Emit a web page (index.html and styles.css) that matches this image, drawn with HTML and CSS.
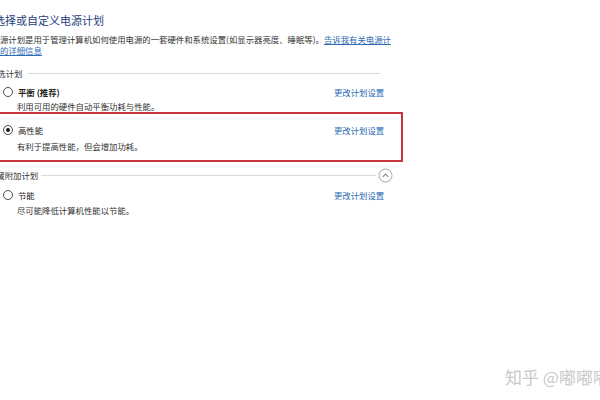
FILE: index.html
```html
<!DOCTYPE html>
<html lang="zh">
<head>
<meta charset="utf-8">
<link rel="stylesheet" href="styles.css">
</head>
<body>
<div class="page">
  <h1 class="title">选择或自定义电源计划</h1>
  <p class="desc"><span class="nowrap">源计划是用于管理计算机如何使用电源的一套硬件和系统设置(如显示器亮度、睡眠等)。<a class="link">告诉我有关电源计</a></span><br><a class="link">的详细信息</a></p>

  <div class="group-head">
    <span class="group-title cut1">首选计划</span>
    <span class="rule"></span>
  </div>

  <div class="plan plan-first">
    <div class="plan-row">
      <span class="radio"></span>
      <span class="plan-name bold">平衡 (推荐)</span>
      <a class="plan-link">更改计划设置</a>
    </div>
    <div class="plan-desc">利用可用的硬件自动平衡功耗与性能。</div>
  </div>

  <div class="plan plan-selected">
    <div class="plan-row">
      <span class="radio checked"></span>
      <span class="plan-name">高性能</span>
      <a class="plan-link">更改计划设置</a>
    </div>
    <div class="plan-desc">有利于提高性能，但会增加功耗。</div>
  </div>

  <div class="group-head group-two">
    <span class="group-title cut2">隐藏附加计划</span>
    <span class="rule short"></span>
    <svg class="toggle" width="15" height="15" viewBox="0 0 15 15"><circle cx="7.5" cy="7.5" r="6.5" fill="#fff" stroke="#a8a8a8" stroke-width="1"/><path d="M4.8 8.8 L7.5 6 L10.2 8.8" fill="none" stroke="#888" stroke-width="1.1"/></svg>
  </div>

  <div class="plan plan-last">
    <div class="plan-row">
      <span class="radio"></span>
      <span class="plan-name">节能</span>
      <a class="plan-link">更改计划设置</a>
    </div>
    <div class="plan-desc">尽可能降低计算机性能以节能。</div>
  </div>
</div>
<div class="watermark">知乎 @嘟嘟嘟</div>
</body>
</html>
```

FILE: styles.css
```css
html, body {
  margin: 0;
  padding: 0;
  background: #fff;
  width: 600px;
  height: 400px;
  overflow: hidden;
  position: relative;
  font-family: "Noto Sans CJK SC", "Noto Sans", sans-serif;
  color: #2b2b2b;
}
.page {
  width: 402px;
  padding-top: 12px;
}
.title {
  margin: 0 0 0 -6px;
  font-size: 11px;
  line-height: 16px;
  font-weight: normal;
  color: #1f3d7a;
}
.desc {
  margin: 6px 0 0 0;
  font-size: 8.4px;
  line-height: 11px;
  color: #333;
}
.nowrap { white-space: nowrap; }
.link {
  color: #2d6bb5;
  text-decoration: underline;
}
.group-head {
  display: flex;
  align-items: center;
  margin-top: 10px;
  height: 14px;
}
.group-two { margin-top: 6px; }
.group-title {
  font-size: 8.4px;
  line-height: 12px;
  color: #333;
  white-space: nowrap;
}
.cut1 { margin-left: -11px; }
.cut2 { margin-left: -12px; }
.rule {
  height: 1px;
  background: #d9d9d9;
  flex: 0 0 352px;
  margin-left: 5px;
}
.rule.short {
  flex: 0 0 335px;
  margin-left: 3px;
}
.toggle {
  display: block;
  margin-left: 2px;
}
.plan-first { margin-top: 5px; padding-bottom: 0; }
.plan-selected {
  border: 2px solid #c8333d;
  border-left: none;
  padding: 9px 0 8px 0;
  margin-right: -1px;
}
.plan-last { margin-top: 6px; }
.plan-row {
  display: flex;
  align-items: center;
  height: 13px;
}
.radio {
  width: 8px;
  height: 8px;
  border: 1px solid #4a4a4a;
  border-radius: 50%;
  background: #fff;
  margin-left: 3px;
  margin-right: 5px;
  position: relative;
  flex: none;
}
.radio.checked::after {
  content: "";
  position: absolute;
  left: 2px;
  top: 2px;
  width: 4px;
  height: 4px;
  border-radius: 50%;
  background: #1a1a1a;
}
.plan-name {
  font-size: 8.4px;
  line-height: 12px;
  color: #222;
  flex: 0 0 316px;
}
.bold { font-weight: bold; }
.plan-link {
  font-size: 8.4px;
  line-height: 12px;
  color: #2d6bb5;
}
.plan-desc {
  margin-top: 2px;
  margin-left: 17px;
  font-size: 8.4px;
  line-height: 12px;
  color: #333;
}
.plan-selected .plan-desc { margin-top: 4px; }
.plan-last .plan-desc { margin-top: 3px; }
.watermark {
  position: absolute;
  left: 505px;
  top: 364px;
  font-size: 17px;
  color: #c9c9c9;
  white-space: nowrap;
  font-family: "Noto Sans CJK SC", sans-serif;
}
```
